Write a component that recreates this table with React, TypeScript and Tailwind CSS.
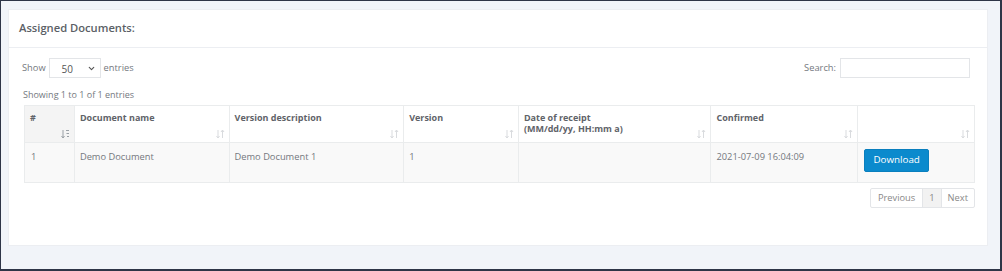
import { ChevronDown } from 'lucide-react';

const SortIcon = ({ active = false }: { active?: boolean }) => (
  <svg width="9" height="10" viewBox="0 0 9 10" className="shrink-0">
    {active ? (
      <g fill="none" stroke="#9aa0a6" strokeWidth="1">
        <path d="M2 1v8M0.5 7l1.5 2 1.5-2" />
        <path d="M5 1.5h3M5.5 4.5h2.5M6 7.5h2" />
      </g>
    ) : (
      <g fill="none" stroke="#d9dbde" strokeWidth="1">
        <path d="M2 1v8M0.5 7l1.5 2 1.5-2" />
        <path d="M6.5 9V1M5 3l1.5-2 1.5 2" />
      </g>
    )}
  </svg>
);

const columns = [
  { label: '#', width: 'w-[50px]', active: true },
  { label: 'Document name', width: 'w-[155px]' },
  { label: 'Version description', width: 'w-[175px]' },
  { label: 'Version', width: 'w-[115px]' },
  { label: 'Date of receipt\n(MM/dd/yy, HH:mm a)', width: 'w-[193px]' },
  { label: 'Confirmed', width: 'w-[147px]' },
  { label: '', width: 'w-[117px]' },
];

const App = () => {
  return (
    <div
      className="w-[1002px] h-[271px] bg-[#f1f4f9] border border-r-2 border-b-2 border-[#2e3547] pl-[7px] pt-[8px] text-[#74787e]"
      style={{ fontFamily: '"Open Sans", sans-serif' }}
    >
      <div className="w-[980px] h-[237px] bg-white border border-[#eceef2]">
        {/* Card header */}
        <div className="h-[38px] px-[10px] flex items-center border-b border-[#eceef2]">
          <h3 className="text-[11.2px] font-semibold text-[#5b5f66]">Assigned Documents:</h3>
        </div>

        <div className="pl-[13px] pr-[12px] pt-[10px]">
          {/* Controls */}
          <div className="flex justify-between items-center h-[20px]">
            <div className="flex items-center gap-[3px] text-[9.3px]">
              <span>Show</span>
              <div className="w-[52px] h-[20px] border border-[#e3e5e8] flex items-center justify-between pl-[12px] pr-[4px] text-[#555]">
                <span className="text-[10px] mt-[2px]">50</span>
                <ChevronDown size={9} strokeWidth={3} />
              </div>
              <span>entries</span>
            </div>
            <div className="flex items-center gap-[4px] text-[9.3px] mr-[5px]">
              <span>Search:</span>
              <div className="w-[130px] h-[20px] border border-[#e3e5e8]" />
            </div>
          </div>

          <div className="text-[9px] mt-[10px] ml-[1px] h-[14px] leading-[14px]">Showing 1 to 1 of 1 entries</div>

          {/* Table */}
          <table className="mt-[3px] ml-[2px] border-collapse text-[9.3px]">
            <thead>
              <tr className="h-[37px]">
                {columns.map((c, i) => (
                  <th
                    key={i}
                    className={`${c.width} border border-[#eaeced] align-top p-0 text-left ${c.active ? 'bg-[#f4f4f4]' : 'bg-white'}`}
                  >
                    <div className="flex justify-between h-[36px] pl-[5px] pr-[4px] pt-[6px] pb-[3px]">
                      <span className="whitespace-pre-line font-bold text-[#5f6369] leading-[11px] text-[9px]">{c.label}</span>
                      <span className="self-end">
                        <SortIcon active={c.active} />
                      </span>
                    </div>
                  </th>
                ))}
              </tr>
            </thead>
            <tbody>
              <tr className="h-[40px] bg-[#f9f9f9] align-top">
                <td className="border border-[#eaeced] pl-[6px] pt-[7px]">1</td>
                <td className="border border-[#eaeced] pl-[5px] pt-[7px]">Demo Document</td>
                <td className="border border-[#eaeced] pl-[5px] pt-[7px]">Demo Document 1</td>
                <td className="border border-[#eaeced] pl-[5px] pt-[7px]">1</td>
                <td className="border border-[#eaeced] pl-[5px] pt-[7px]"></td>
                <td className="border border-[#eaeced] pl-[5px] pt-[7px]">2021-07-09 16:04:09</td>
                <td className="border border-[#eaeced] pl-[6px] pt-[6px]">
                  <button className="w-[65px] h-[23px] bg-[#0b8acd] text-white rounded-[2px] text-[9.8px] border border-[#0a7fbe]">
                    Download
                  </button>
                </td>
              </tr>
            </tbody>
          </table>

          {/* Pagination */}
          <div className="flex justify-end mt-[5px]">
            <div className="flex h-[20px] border border-[#e3e5e8] rounded-[2px] text-[9.3px] text-[#888]">
              <span className="px-[7px] flex items-center">Previous</span>
              <span className="px-[6px] flex items-center bg-[#f2f2f2] border-x border-[#e3e5e8]">1</span>
              <span className="px-[6px] flex items-center">Next</span>
            </div>
          </div>
        </div>
      </div>
    </div>
  );
};

export default App;
